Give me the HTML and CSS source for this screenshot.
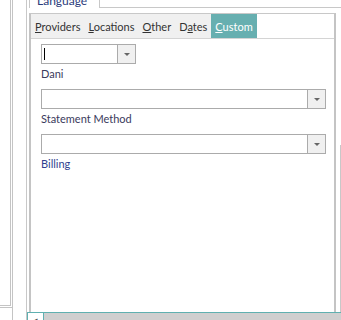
FILE: index.html
```html
<!DOCTYPE html>
<html lang="en">
<head>
    <meta charset="UTF-8">
    <meta name="viewport" content="width=device-width, initial-scale=1.0">
    <title>Custom Fields</title>
    <link rel="stylesheet" href="styles.css">
</head>
<body>
    <!-- Left edge of the neighbouring panel -->
    <div class="side">
        <div class="side-top"></div>
        <div class="side-bottom"></div>
    </div>

    <div class="main">
        <!-- Outer tab strip, only the bottom of it is visible -->
        <div class="outer-tabs">
            <div class="lang-tab"><span>Language</span></div>
            <div class="outer-fill"></div>
        </div>

        <div class="outer-body">
            <div class="row">
                <div class="inner">
                    <div class="tab-strip">
                        <div class="tabs">
                            <div class="tab"><u>P</u>roviders</div>
                            <div class="tab"><u>L</u>ocations</div>
                            <div class="tab"><u>O</u>ther</div>
                            <div class="tab">D<u>a</u>tes</div>
                            <div class="tab active"><u>C</u>ustom</div>
                        </div>
                        <div class="tab-rest"></div>
                    </div>

                    <div class="panel">
                        <div class="combo short">
                            <div class="combo-text"><span class="caret"></span></div>
                            <div class="combo-btn"><span class="arrow"></span></div>
                        </div>
                        <div class="label">Dani</div>

                        <div class="combo">
                            <div class="combo-text"></div>
                            <div class="combo-btn"><span class="arrow"></span></div>
                        </div>
                        <div class="label">Statement Method</div>

                        <div class="combo">
                            <div class="combo-text"></div>
                            <div class="combo-btn"><span class="arrow"></span></div>
                        </div>
                        <div class="label billing">Billing</div>
                    </div>
                </div>
                <div class="gutter"><div class="gutter-line"></div></div>
            </div>

            <!-- Horizontal scrollbar -->
            <div class="hscroll">
                <div class="hs-btn">&#9666;</div>
                <div class="hs-track"></div>
            </div>
        </div>
    </div>
</body>
</html>
```

FILE: styles.css
```css
body {
    margin: 0;
    width: 341px;
    height: 320px;
    overflow: hidden;
    display: flex;
    background-color: #fff;
    font-family: Lato, "Open Sans", Arial, sans-serif;
    font-size: 11px;
    color: #333;
}
.side {
    width: 26px;
    display: flex;
    flex-direction: column;
}
.side-top {
    width: 10px;
    height: 305px;
    border-right: 3px double #c4c4c4;
    border-bottom: 3px double #c4c4c4;
}
.side-bottom {
    flex: 1;
    width: 12px;
    border-right: 1px solid #c4c4c4;
}
.main {
    flex: 1;
    display: flex;
    flex-direction: column;
    border-left: 1px solid #c8c8c8;
}
.outer-tabs {
    display: flex;
    height: 8px;
}
.lang-tab {
    margin-left: 2px;
    width: 62px;
    padding-left: 7px;
    border-left: 1px solid #c8c8c8;
    border-right: 1px solid #c8c8c8;
    overflow: hidden;
    color: #2a3a7a;
    font-size: 12px;
}
.lang-tab span {
    display: block;
    margin-top: -7px;
    line-height: 16px;
}
.outer-fill {
    flex: 1;
    border-bottom: 1px solid #c8c8c8;
}
.outer-body {
    flex: 1;
    display: flex;
    flex-direction: column;
}
.row {
    flex: 1;
    display: flex;
    padding-top: 5px;
}
.inner {
    margin-left: 2px;
    width: 303px;
    display: flex;
    flex-direction: column;
    border-top: 1px solid #c8c8c8;
    border-left: 2px solid #c4c4c4;
    border-right: 2px solid #c4c4c4;
}
.tab-strip {
    display: flex;
    height: 24px;
    border-bottom: 1px solid #d4d4d4;
}
.tabs {
    display: flex;
    background-color: #f0f0f0;
}
.tab {
    padding: 0 4px;
    line-height: 26px;
}
.tab.active {
    background-color: #67afb0;
    color: #fff;
}
.tab-rest {
    flex: 1;
}
.panel {
    flex: 1;
    padding: 5px 0 0 10px;
}
.combo {
    width: 283px;
    height: 18px;
    display: flex;
    border: 1px solid #ababab;
    margin-bottom: 2px;
}
.combo.short {
    width: 93px;
}
.combo-text {
    flex: 1;
    position: relative;
}
.caret {
    position: absolute;
    left: 2px;
    top: 3px;
    width: 1px;
    height: 12px;
    background-color: #000;
}
.combo-btn {
    width: 17px;
    border-left: 1px solid #ababab;
    background-color: #f0f0f0;
    display: flex;
    align-items: center;
    justify-content: center;
}
.arrow {
    width: 0;
    height: 0;
    border-left: 3px solid transparent;
    border-right: 3px solid transparent;
    border-top: 3px solid #666;
}
.label {
    line-height: 16px;
    margin-bottom: 7px;
    color: #3a3a5c;
}
.label.billing {
    color: #2f3f8f;
}
.gutter {
    flex: 1;
    display: flex;
    flex-direction: column;
}
.gutter-line {
    flex: 1;
    margin-top: 132px;
    width: 4px;
    border-right: 1px solid #c8c8c8;
}
.hscroll {
    height: 7px;
    display: flex;
    border-top: 1px solid #5fb0b0;
}
.hs-btn {
    width: 15px;
    border-right: 1px solid #5fb0b0;
    border-left: 1px solid #5fb0b0;
    background-color: #fff;
    color: #555;
    font-size: 9px;
    line-height: 14px;
    text-align: center;
}
.hs-track {
    flex: 1;
    background-color: #cfcfcf;
}
```
